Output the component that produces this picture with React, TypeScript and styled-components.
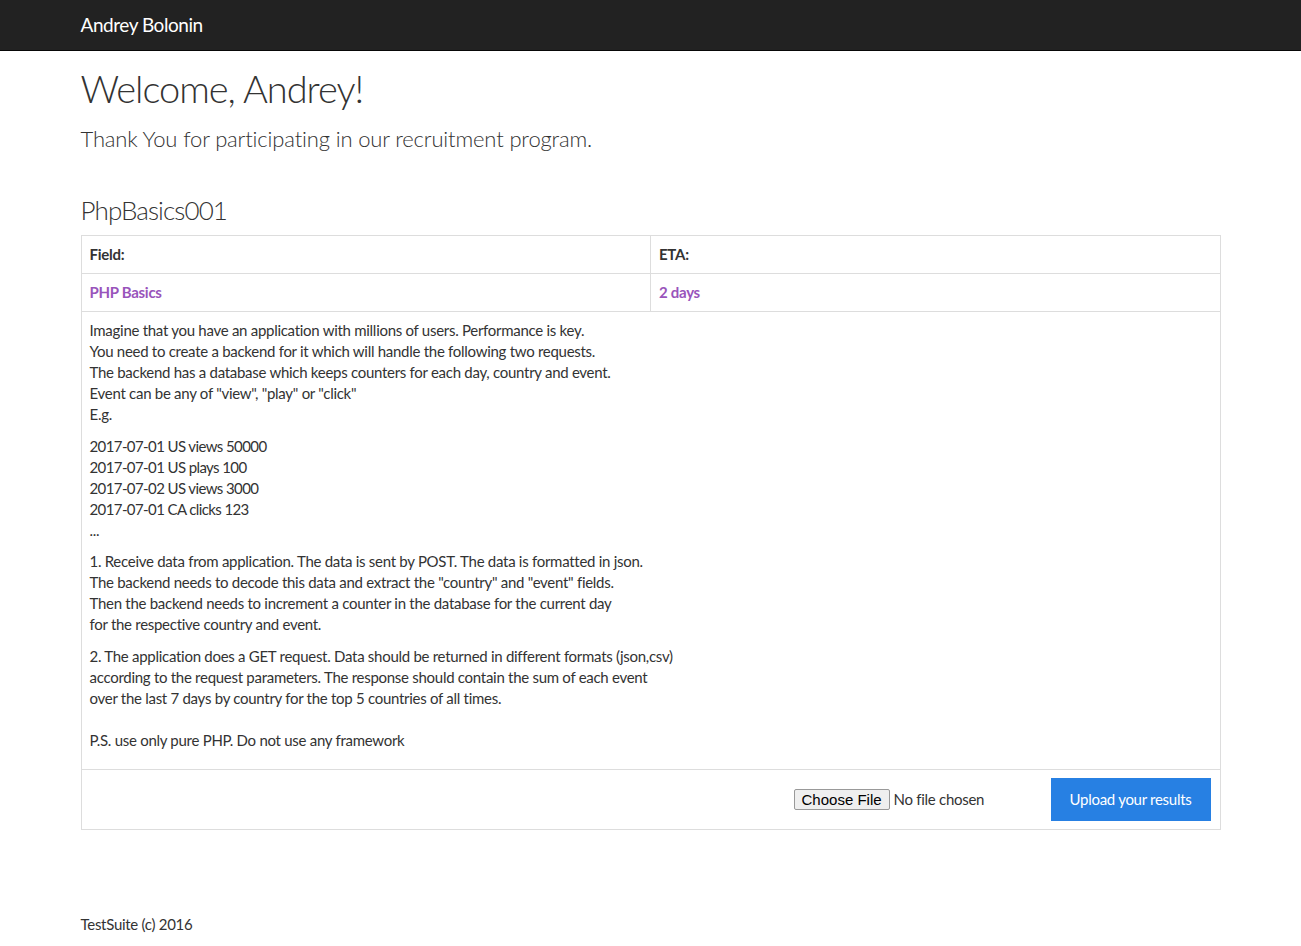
import React from "react";
import styled, { createGlobalStyle } from "styled-components";

const Global = createGlobalStyle`
  html, body { margin: 0; padding: 0; background: #fff; }
  body {
    font-family: Lato, "Liberation Sans", sans-serif;
    font-size: 15px;
    line-height: 21px;
    letter-spacing: -0.28px;
    color: #333;
  }
  * { box-sizing: border-box; }
`;

const Navbar = styled.nav`
  height: 51px;
  background: #222;
  border-bottom: 1px solid #080808;
`;

const Container = styled.div`
  width: 1170px;
  margin: 0 auto;
  padding: 0 15px;
`;

const Brand = styled.a`
  display: block;
  height: 50px;
  line-height: 50px;
  font-size: 19px;
  letter-spacing: -0.45px;
  color: #fff;
  text-decoration: none;
`;

const Title = styled.h1`
  font-size: 38px;
  font-weight: 300;
  line-height: 45px;
  letter-spacing: -1px;
  margin: 15px 0 0;
  color: #333;
`;

const Lead = styled.p`
  font-size: 22px;
  font-weight: 300;
  line-height: 30px;
  letter-spacing: -0.15px;
  margin: 13px 0 0;
`;

const TaskTitle = styled.h3`
  font-size: 26px;
  font-weight: 300;
  line-height: 29px;
  letter-spacing: -0.9px;
  margin: 42px 0 10px;
`;

const Table = styled.table`
  width: 100%;
  border-collapse: collapse;
  border: 1px solid #ddd;
`;

const Cell = styled.td<{ $head?: boolean; $accent?: boolean }>`
  border: 1px solid #ddd;
  padding: 8px;
  vertical-align: top;
  width: 50%;
  font-weight: ${(p) => (p.$head || p.$accent ? 700 : 400)};
  color: ${(p) => (p.$accent ? "#9954bb" : "#333")};
`;

const Para = styled.p`
  margin: 0 0 10.5px;
`;

const Mono = styled.span`
  letter-spacing: -0.6px;
`;

const UploadRow = styled.form`
  display: flex;
  justify-content: flex-end;
  align-items: center;
  gap: 37px;
  margin-right: 1px;
`;

const FileInput = styled.input`
  font-family: Lato, "Liberation Sans", sans-serif;
  font-size: 15px;
  letter-spacing: -0.28px;
  color: #333;
  width: 220px;
  &::file-selector-button {
    font-family: "Liberation Sans", Arial, sans-serif;
    font-size: 15px;
    letter-spacing: 0;
    padding: 1px 7px;
    margin-right: 4px;
    border: 1px solid #999;
    border-radius: 2px;
    background: #efefef;
    color: #000;
  }
`;

const UploadButton = styled.button`
  background: #2780e3;
  color: #fff;
  border: 1px solid transparent;
  border-radius: 0;
  padding: 10px 18px;
  font-family: Lato, "Liberation Sans", sans-serif;
  font-size: 15px;
  line-height: 21px;
  letter-spacing: -0.28px;
  cursor: pointer;
`;

const Footer = styled.footer`
  margin-top: 84px;
  padding-bottom: 10px;
`;

export default function App() {
  return (
    <>
      <Global />
      <Navbar>
        <Container>
          <Brand href="#">Andrey Bolonin</Brand>
        </Container>
      </Navbar>
      <Container>
        <Title>Welcome, Andrey!</Title>
        <Lead>Thank You for participating in our recruitment program.</Lead>
        <TaskTitle>PhpBasics001</TaskTitle>
        <Table>
          <tbody>
            <tr>
              <Cell $head>Field:</Cell>
              <Cell $head>ETA:</Cell>
            </tr>
            <tr>
              <Cell $accent>PHP Basics</Cell>
              <Cell $accent>2 days</Cell>
            </tr>
            <tr>
              <Cell colSpan={2}>
                <Para>
                  Imagine that you have an application with millions of users. Performance is key.
                  <br />
                  You need to create a backend for it which will handle the following two requests.
                  <br />
                  The backend has a database which keeps counters for each day, country and event.
                  <br />
                  Event can be any of "view", "play" or "click"
                  <br />
                  E.g.
                </Para>
                <Para>
                  <Mono>
                    2017-07-01 US views 50000
                    <br />
                    2017-07-01 US plays 100
                    <br />
                    2017-07-02 US views 3000
                    <br />
                    2017-07-01 CA clicks 123
                  </Mono>
                  <br />
                  ...
                </Para>
                <Para>
                  1. Receive data from application. The data is sent by POST. The data is formatted in json.
                  <br />
                  The backend needs to decode this data and extract the "country" and "event" fields.
                  <br />
                  Then the backend needs to increment a counter in the database for the current day
                  <br />
                  for the respective country and event.
                </Para>
                <Para>
                  2. The application does a GET request. Data should be returned in different formats (json,csv)
                  <br />
                  according to the request parameters. The response should contain the sum of each event
                  <br />
                  over the last 7 days by country for the top 5 countries of all times.
                  <br />
                  <br />
                  P.S. use only pure PHP. Do not use any framework
                </Para>
              </Cell>
            </tr>
            <tr>
              <Cell colSpan={2}>
                <UploadRow onSubmit={(e) => e.preventDefault()}>
                  <FileInput type="file" />
                  <UploadButton type="submit">Upload your results</UploadButton>
                </UploadRow>
              </Cell>
            </tr>
          </tbody>
        </Table>
        <Footer>TestSuite (c) 2016</Footer>
      </Container>
    </>
  );
}
